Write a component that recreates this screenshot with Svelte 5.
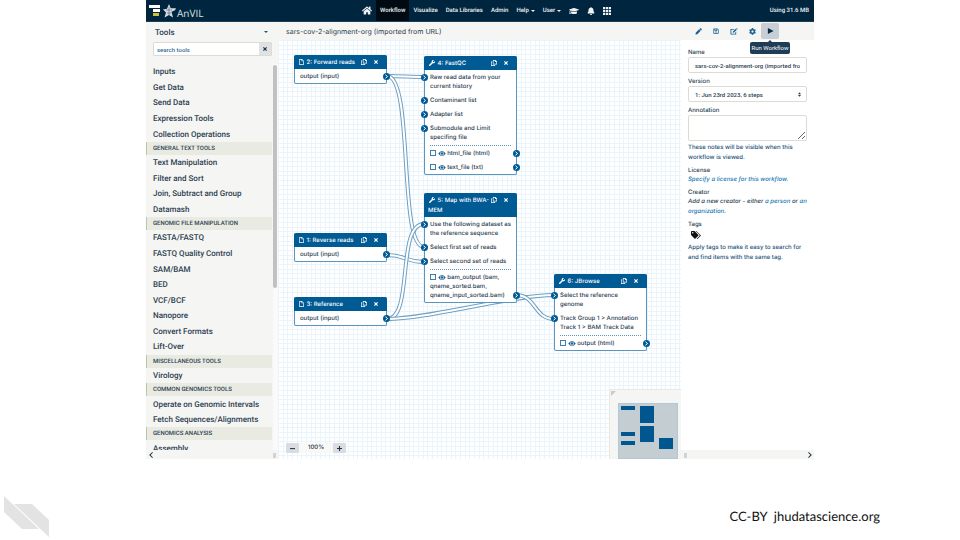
<script>
  const icons = {
    home: ['0 0 576 512', 'M280.37 148.26L96 300.11V464a16 16 0 0 0 16 16l112.06-.29a16 16 0 0 0 15.92-16V368a16 16 0 0 1 16-16h64a16 16 0 0 1 16 16v95.64a16 16 0 0 0 16 16.05L464 480a16 16 0 0 0 16-16V300L295.67 148.26a12.19 12.19 0 0 0-15.3 0zM571.6 251.47L488 182.56V44.05a12 12 0 0 0-12-12h-56a12 12 0 0 0-12 12v72.61L318.47 43a48 48 0 0 0-61 0L4.34 251.47a12 12 0 0 0-1.6 16.9l25.5 31A12 12 0 0 0 45.15 301l235.22-193.74a12.19 12.19 0 0 1 15.3 0L530.9 301a12 12 0 0 0 16.9-1.6l25.5-31a12 12 0 0 0-1.7-16.93z'],
    cap: ['0 0 640 512', 'M622.34 153.2L343.4 67.5c-15.2-4.67-31.6-4.67-46.79 0L17.66 153.2c-23.54 7.23-23.54 38.36 0 45.59l48.63 14.94c-10.67 13.19-17.23 29.28-17.88 46.9C38.78 266.15 32 276.11 32 288c0 10.78 5.68 19.85 13.86 25.65L20.33 428.53C18.11 438.52 25.71 448 35.94 448h56.11c10.24 0 17.84-9.48 15.62-19.47L82.14 313.65C90.32 307.85 96 298.78 96 288c0-11.57-6.47-21.25-15.66-26.87.76-15.02 8.44-28.3 20.69-36.72L296.6 284.5c9.06 2.78 26.44 6.25 46.79 0l278.95-85.7c23.55-7.24 23.55-38.36 0-45.6zM352.79 315.09c-28.53 8.76-52.84 3.92-65.59 0l-145.02-44.55L128 384c0 35.35 85.96 64 192 64s192-28.65 192-64l-14.18-113.47-145.03 44.56z'],
    bell: ['0 0 448 512', 'M224 512c35.32 0 63.97-28.65 63.97-64H160.03c0 35.35 28.65 64 63.97 64zm215.39-149.71c-19.32-20.76-55.47-51.99-55.47-154.29 0-77.7-54.48-139.9-127.94-155.16V32c0-17.67-14.32-32-31.98-32s-31.98 14.33-31.98 32v20.84C118.56 68.1 64.08 130.3 64.08 208c0 102.3-36.15 133.53-55.47 154.29-6 6.45-8.66 14.16-8.61 21.71.11 16.4 12.98 32 32.1 32h383.8c19.12 0 32-15.6 32.1-32 .05-7.55-2.61-15.27-8.61-21.71z'],
    grid: ['0 0 18 18', 'M0 0h5v5H0zM6.500 0h5v5h-5zM13 0h5v5h-5zM0 6.500h5v5H0zM6.500 6.500h5v5h-5zM13 6.500h5v5h-5zM0 13h5v5H0zM6.500 13h5v5h-5zM13 13h5v5h-5z'],
    cog: ['0 0 512 512', 'M487.4 315.7l-42.6-24.6c4.3-23.2 4.3-47 0-70.2l42.6-24.6c4.9-2.8 7.1-8.6 5.5-14-11.1-35.6-30-67.8-54.7-94.6-3.8-4.1-10-5.1-14.8-2.3L380.8 110c-17.9-15.4-38.5-27.3-60.8-35.1V25.8c0-5.6-3.9-10.5-9.4-11.7-36.7-8.2-74.3-7.8-109.2 0-5.5 1.2-9.4 6.1-9.4 11.7V75c-22.2 7.9-42.8 19.8-60.8 35.1L88.7 85.5c-4.9-2.8-11-1.9-14.8 2.3-24.7 26.7-43.6 58.9-54.7 94.6-1.7 5.4.6 11.2 5.5 14L67.3 221c-4.3 23.2-4.3 47 0 70.2l-42.6 24.6c-4.9 2.8-7.1 8.6-5.5 14 11.1 35.6 30 67.8 54.7 94.6 3.8 4.1 10 5.1 14.8 2.3l42.6-24.6c17.9 15.4 38.5 27.3 60.8 35.1v49.2c0 5.6 3.9 10.5 9.4 11.7 36.7 8.2 74.3 7.8 109.2 0 5.5-1.2 9.4-6.1 9.4-11.7v-49.2c22.2-7.9 42.8-19.8 60.8-35.1l42.6 24.6c4.9 2.8 11 1.9 14.8-2.3 24.7-26.7 43.6-58.9 54.7-94.6 1.5-5.5-.7-11.3-5.6-14.1zM256 336c-44.1 0-80-35.9-80-80s35.9-80 80-80 80 35.9 80 80-35.9 80-80 80z'],
    wrench: ['0 0 512 512', 'M507.73 109.1c-2.24-9.03-13.54-12.09-20.12-5.51l-74.36 74.36-67.88-11.31-11.31-67.88 74.36-74.36c6.62-6.62 3.43-17.9-5.66-20.16-47.38-11.74-99.55.91-136.58 37.93-39.64 39.64-50.55 97.1-34.05 147.2L18.74 402.76c-24.99 24.99-24.99 65.51 0 90.5 24.99 24.99 65.51 24.99 90.5 0l213.21-213.21c50.12 16.71 107.47 5.68 147.37-34.22 37.07-37.07 49.7-89.32 37.91-136.73z'],
    play: ['0 0 16 16', 'M2 1v14l13-7z'],
    pencil: ['0 0 16 16', 'M1 15l1-4.500 7.500-7.500 3.500 3.500L5.500 14zM10.300 2.200l1.500-1.500q1-.7 1.800 0l1.700 1.700q.7.900 0 1.800l-1.500 1.500z'],
    save: ['0 0 16 16', 'M1 1h11l3 3v11H1zM3 3v10h10V5l-1.500-2H11v4H4V3zM6 3v2.500h3V3zM8 8.500a2 2 0 1 1 0 4 2 2 0 0 1 0-4z'],
    edit: ['0 0 18 16', 'M1 2h9L8.500 4H3v9h9v-3l2-2v7H1zM6 11l.6-3L13 1.600l2.500 2.500L9 10.500zM14 .8l1-.8 2.500 2.300-1 1z'],
    file: ['0 0 12 16', 'M1 0h6.500L12 4.500V16H0V0zM1.800 1.800v12.400h8.400V6H6V1.800zM7.500 2v2.500H10z'],
    copy: ['0 0 16 16', 'M5 0h7l4 4v8H5zM6.700 1.700v8.600h7.600V5.500H11V1.700zM0 4h3.500v1.700H1.700v8.600h7.600V13H11v3H0z'],
    close: ['0 0 12 12', 'M2.500 0L6 3.500 9.500 0 12 2.500 8.500 6 12 9.500 9.500 12 6 8.500 2.500 12 0 9.500 3.500 6 0 2.500z'],
    eye: ['0 0 18 12', 'M0 6Q4 0 9 0t9 6q-4 6-9 6T0 6zM9 1.500a4.500 4.500 0 1 0 0 9 4.500 4.500 0 0 0 0-9zM9 3a3 3 0 1 1 0 6 3 3 0 0 1 0-6z'],
    tags: ['0 0 20 16', 'M0 1.500Q0 0 1.500 0H7l7.500 7.500q1 1 0 2L9 15q-1 1-2 0L0 8zM3.500 2a1.500 1.500 0 1 0 0 3 1.500 1.500 0 0 0 0-3zM9 0h1.500l8.500 8q1 1 0 2l-5.500 5.500q-1 .8-2-.2l5-5q1.500-1.800 0-3.300z'],
    left: ['0 0 10 16', 'M8.500 0L10 2 4 8l6 6-1.500 2L0 8z'],
    right: ['0 0 10 16', 'M1.500 0L0 2l6 6-6 6 1.500 2L10 8z'],
    minus: ['0 0 12 12', 'M0 5h12v2.500H0z'],
    plus: ['0 0 12 12', 'M4.700 0h2.600v4.700H12v2.600H7.300V12H4.700V7.300H0V4.700h4.700z'],
    caret: ['0 0 8 4', 'M0 0h8L4 4z'],
    sort: ['0 0 8 12', 'M4 0l4 5H0zM0 7h8l-4 5z'],
  };

  const tools = [
    'Inputs', 'Get Data', 'Send Data', 'Expression Tools', 'Collection Operations',
    '#GENERAL TEXT TOOLS', 'Text Manipulation', 'Filter and Sort', 'Join, Subtract and Group', 'Datamash',
    '#GENOMIC FILE MANIPULATION', 'FASTA/FASTQ', 'FASTQ Quality Control', 'SAM/BAM', 'BED', 'VCF/BCF', 'Nanopore', 'Convert Formats', 'Lift-Over',
    '#MISCELLANEOUS TOOLS', 'Virology',
    '#COMMON GENOMICS TOOLS', 'Operate on Genomic Intervals', 'Fetch Sequences/Alignments',
    '#GENOMICS ANALYSIS', 'Assembly',
  ];

  const nodes = [
    { x: 16, y: 15, title: '2: Forward reads', icon: 'file', data: 'output (input)' },
    { x: 16, y: 193, title: '1: Reverse reads', icon: 'file', data: 'output (input)' },
    { x: 16, y: 257, title: '3: Reference', icon: 'file', data: 'output (input)' },
    { x: 146, y: 16, title: '4: FastQC', icon: 'wrench',
      inputs: ['Raw read data from your\ncurrent history', 'Contaminant list', 'Adapter list', 'Submodule and Limit\nspecifing file'],
      outputs: ['html_file (html)', 'text_file (txt)'] },
    { x: 146, y: 153, title: '5: Map with BWA-MEM', icon: 'wrench',
      inputs: ['Use the following dataset as\nthe reference sequence', 'Select first set of reads', 'Select second set of reads'],
      outputs: ['bam_output (bam, qname_sorted.bam, qname_input_sorted.bam)'] },
    { x: 276, y: 234, title: '6: JBrowse', icon: 'wrench',
      inputs: ['Select the reference\ngenome', 'Track Group 1 > Annotation\nTrack 1 > BAM Track Data'],
      outputs: ['output (html)'] },
  ];

  const wires = [
    'M109 36C124 36 132 37 146 37',
    'M109 36C136 36 120 207 146 207',
    'M109 215C128 215 127 222 146 222',
    'M109 279C136 279 118 184 146 184',
    'M109 279C150 279 235 255 276 255',
    'M238 255C258 255 256 279 276 279',
  ];

  const minis = [[3, 3, 14, 4], [3, 29, 14, 4], [3, 38, 14, 4], [22, 3, 14, 17], [22, 23, 14, 16], [41, 35, 14, 11]];
</script>

{#snippet icon(name, w, h)}
  <svg class="icon" viewBox={icons[name][0]} width={w} height={h} aria-hidden="true"><path fill-rule="evenodd" d={icons[name][1]} /></svg>
{/snippet}

{#snippet terminal(side)}
  <svg class="terminal {side}" viewBox="0 0 14 14" width="7" height="7" aria-hidden="true">
    <circle cx="7" cy="7" r="7" /><path d="M5 3.500L9 7l-4 3.500" />
  </svg>
{/snippet}

<div class="slide">
  <div class="app">
    <nav class="masthead">
      <a class="brand" href="#anvil">
        <svg viewBox="0 0 27 14" width="27" height="14" aria-hidden="true">
          <path fill="#fff" d="M0 1h11v3H0zM4 5h7v3H4z" /><path fill="#d4bd31" d="M4 9h6v3H4z" />
          <path fill="#d6dde2" d="M20 0l1.700 4.300H27l-1 2-3.500 1.500 1.500 5.700-4-2.500-4.500 2.500 1.500-5-3-3 4-.7z" />
          <path d="M20 3v8M17 6h6M18 9h4" stroke="#00263f" stroke-width=".4" />
        </svg>
        <span>AnVIL</span>
      </a>
      <div class="links">
        <a href="#home" aria-label="Home">{@render icon('home', 10, 9)}</a>
        <a class="active" href="#workflow">Workflow</a>
        <a href="#visualize">Visualize</a>
        <a href="#data">Data Libraries</a>
        <a href="#admin">Admin</a>
        <a href="#help">Help {@render icon('caret', 4, 2)}</a>
        <a href="#user">User {@render icon('caret', 4, 2)}</a>
        <a href="#training" aria-label="Training">{@render icon('cap', 10, 8)}</a>
        <a href="#alerts" aria-label="Notifications">{@render icon('bell', 8, 8)}</a>
        <a href="#apps" aria-label="Apps">{@render icon('grid', 8, 8)}</a>
      </div>
      <span class="usage">Using 31.6 MB</span>
    </nav>

    <div class="body">
      <aside class="tools">
        <div class="tools-head"><h2>Tools</h2>{@render icon('caret', 4, 2)}</div>
        <div class="search">
          <input type="text" placeholder="search tools" aria-label="search tools" />
          <button aria-label="Clear search">{@render icon('close', 4, 4)}</button>
        </div>
        <div class="list">
          <ul>
            {#each tools as t}
              {#if t[0] === '#'}<li class="section">{t.slice(1)}</li>{:else}<li><a href="#tool">{t}</a></li>{/if}
            {/each}
          </ul>
          <div class="track"><div class="thumb"></div></div>
        </div>
        <div class="strip"><button aria-label="Collapse tools">{@render icon('left', 4, 6)}</button><i></i></div>
      </aside>

      <main>
        <header class="title">
          <h1>sars-cov-2-alignment-org (imported from URL)</h1>
          <div class="actions">
            <button aria-label="Edit attributes">{@render icon('pencil', 7, 7)}</button>
            <button aria-label="Save">{@render icon('save', 6, 6)}</button>
            <button aria-label="Report">{@render icon('edit', 8, 7)}</button>
            <button aria-label="Options">{@render icon('cog', 7, 7)}</button>
            <button class="run" aria-label="Run Workflow">{@render icon('play', 7, 8)}<span class="tip">Run Workflow</span></button>
          </div>
        </header>

        <div class="work">
          <section class="canvas">
            <svg class="wires" aria-hidden="true">
              {#each wires as d}<path class="outer" {d} /><path class="inner" {d} />{/each}
            </svg>
            {#each nodes as n}
              <article class="node" style="left:{n.x}px;top:{n.y}px">
                <header>
                  <h3>{@render icon(n.icon, n.icon === 'file' ? 5 : 6, 6)} {n.title}</h3>
                  <button aria-label="Duplicate">{@render icon('copy', 6, 6)}</button>
                  <button aria-label="Remove">{@render icon('close', 4, 4)}</button>
                </header>
                {#if n.data}
                  <div class="row">{n.data}{@render terminal('out')}</div>
                {:else}
                  {#each n.inputs as t}<div class="row">{t}{@render terminal('in')}</div>{/each}
                  <hr />
                  {#each n.outputs as t}
                    <div class="row"><label><input type="checkbox" /> {@render icon('eye', 8, 5)} {t}</label>{@render terminal('out')}</div>
                  {/each}
                {/if}
              </article>
            {/each}
            <div class="zoom">
              <button aria-label="Zoom out">{@render icon('minus', 5, 5)}</button>
              <span>100%</span>
              <button aria-label="Zoom in">{@render icon('plus', 5, 5)}</button>
            </div>
            <div class="minimap">
              <svg class="grip" viewBox="0 0 5 5" width="5" height="5" aria-hidden="true"><path d="M0 0h5L0 5z" /></svg>
              <svg class="map" width="60" height="56" aria-hidden="true">
                {#each minis as [x, y, w, h]}<rect {x} {y} width={w} height={h} />{/each}
              </svg>
            </div>
          </section>

          <aside class="props">
            <div class="form">
              <label for="name">Name</label>
              <input id="name" type="text" value="sars-cov-2-alignment-org (imported from URL)" />
              <label for="version">Version</label>
              <div class="select">
                <select id="version"><option>1: Jun 23rd 2023, 6 steps</option></select>
                {@render icon('sort', 3, 5)}
              </div>
              <label for="note">Annotation</label>
              <textarea id="note"></textarea>
              <p class="hint">These notes will be visible when this workflow is viewed.</p>
              <h4>License</h4>
              <p><a href="#license">Specify a license for this workflow.</a></p>
              <h4>Creator</h4>
              <p><em>Add a new creator - either <a href="#person">a person</a> or <a href="#org">an organization</a>.</em></p>
              <h4>Tags</h4>
              <button class="tags" aria-label="Add tags">{@render icon('tags', 10, 8)}</button>
              <p class="hint">Apply tags to make it easy to search for and find items with the same tag.</p>
            </div>
            <div class="strip"><i></i><button aria-label="Collapse panel">{@render icon('right', 4, 6)}</button></div>
          </aside>
        </div>
      </main>
    </div>
  </div>

  <footer>
    <svg viewBox="0 0 46 41" width="46" height="41" aria-hidden="true">
      <path fill="#e3e3e3" d="M0 0l35 33H18L0 16zM10 8h18l17 16v17z" />
    </svg>
    <p>CC-BY&nbsp; jhudatascience.org</p>
  </footer>
</div>

<style>
  :global(body) { margin: 0; background: #fff; }
  .slide { min-height: 100vh; display: flex; flex-direction: column; font: 500 6px/9px Inter, "Liberation Sans", Arial, sans-serif; color: #2c3e50; text-rendering: geometricPrecision; }
  .slide * { box-sizing: border-box; }
  h1, h2, h3, h4, p, ul { margin: 0; padding: 0; font: inherit; }
  button { border: 0; padding: 0; background: none; color: inherit; font: inherit; display: flex; align-items: center; justify-content: center; }
  input, select, textarea { font: inherit; color: inherit; margin: 0; }
  a { color: inherit; text-decoration: none; }
  .icon { fill: currentColor; flex: none; }

  .app { flex: 1; margin: 0 146px; display: flex; flex-direction: column; }
  .masthead { height: 22px; background: #00263f; color: #f0f3f5; display: flex; align-items: center; justify-content: space-between; padding: 0 5px 0 3px; border-bottom: 1px solid #1d3d54; font-family: Roboto, sans-serif; }
  .brand { display: flex; align-items: center; gap: 1px; font: 10px/14px "Open Sans", sans-serif; color: #dbe2e7; }
  .brand span { padding-top: 4px; }
  .links { display: flex; align-self: stretch; }
  .links a { display: flex; align-items: center; gap: 2px; padding: 0 4px; }
  .links .active { background: #000a12; }

  .body { flex: 1; display: flex; }
  .tools { width: 132px; background: #f5f5f3; display: flex; flex-direction: column; }
  .tools-head { height: 20px; display: flex; align-items: center; justify-content: space-between; padding: 0 10px 0 9px; font-family: Roboto, sans-serif; font-size: 8px; color: #25537b; }
  .tools-head h2 { color: #2c3e50; }
  .search { display: flex; height: 14px; margin: 0 6px 8px 7px; border: 1px solid #dcdcd6; border-radius: 1px; }
  .search input { flex: 1; min-width: 0; border: 0; padding: 0 3px; background: #fff; font-family: Roboto, sans-serif; }
  .search input::placeholder { color: #356a96; opacity: 1; }
  .search button { width: 12px; background: #dfe1e2; color: #1d3549; }
  .list { flex: 1; display: flex; overflow: hidden; min-height: 0; font-family: Roboto, sans-serif; font-size: 8px; }
  .list ul { flex: 1; list-style: none; display: flex; flex-direction: column; margin: 0 1px -6px 0; }
  .list li { flex: 31 0 0; display: flex; align-items: center; padding-left: 7px; white-space: nowrap; }
  .list .section { flex-grow: 26; background: #e9ebe3; border-left: 1px solid #bac7a7; padding-left: 6px; font-size: 6px; }
  .track { width: 5px; background: #fafafa; padding: 1px 1px 0 0; }
  .thumb { height: 58%; background: #c1c1c1; border-radius: 2px; }
  .strip { height: 9px; display: flex; align-items: center; justify-content: space-between; padding: 1px 2px 0 3px; background: #f5f5f3; color: #1d3549; }
  .strip i { width: 3px; height: 5px; background: #d2d2d0; }

  main { flex: 1; min-width: 0; display: flex; flex-direction: column; }
  .title { height: 18px; background: #f5f5f3; display: flex; align-items: center; justify-content: space-between; padding: 0 35px 0 8px; }
  .title h1 { font-size: 7px; font-weight: 400; }
  .actions { display: flex; height: 16px; color: #1b6497; }
  .actions button { width: 18px; }
  .actions .run { position: relative; background: #c8ced6; color: #0b2b45; border-radius: 2px; }
  .tip { position: absolute; z-index: 3; top: 19px; left: -11px; width: 40px; line-height: 12px; white-space: nowrap; background: #1f3d55; color: #fff; border-radius: 2px; font-family: Roboto, sans-serif; font-weight: 400; }
  .tip::before { content: ""; position: absolute; top: -2px; left: 18px; border: 2px solid transparent; border-top: 0; border-bottom-color: #1f3d55; }

  .work { flex: 1; display: flex; }
  .canvas {
    flex: 1; position: relative; overflow: hidden;
    background-image:
      linear-gradient(90deg, #eaf5fb 1px, transparent 1px 5px, #eaf5fb 5px 6px, transparent 6px 9px, #eaf5fb 9px 10px, transparent 10px),
      linear-gradient(#eaf5fb 1px, transparent 1px 5px, #eaf5fb 5px 6px, transparent 6px 9px, #eaf5fb 9px 10px, transparent 10px);
    background-size: 14px 14px;
  }
  .wires { position: absolute; inset: 0; width: 100%; height: 100%; fill: none; }
  .outer { stroke: #6f9fc2; stroke-width: 4; }
  .inner { stroke: #fff; stroke-width: 2; }
  .node { position: absolute; width: 93px; background: #fff; border: 1px solid #5b95bd; border-top: 0; border-radius: 2px; }
  .node header { display: flex; align-items: flex-start; gap: 7px; margin: 0 -1px; padding: 2px 9px 1px 4px; line-height: 10px; background: #005a94; color: #fff; border-radius: 2px 2px 0 0; }
  .node h3 { flex: 1; margin-right: -7px; padding-top: 1px; }
  .node h3 .icon { vertical-align: -1px; margin: 0 1px; }
  .node header button { height: 10px; }
  .row { position: relative; padding: 3px 2px 2px 5px; white-space: pre-line; }
  .row input { appearance: none; width: 6px; height: 6px; border: 1px solid #3f7fac; vertical-align: -1px; background: #fff; }
  .row .icon { color: #1b6497; vertical-align: -1px; }
  .node hr { margin: 1px 5px 0; border: 0; border-top: 1px dotted #5b95bd; }
  .terminal { position: absolute; top: 4px; fill: #005a94; }
  .row:last-child .terminal { top: auto; bottom: 3px; }
  .terminal path { fill: none; stroke: #fff; stroke-width: 2; }
  .in { left: -4px; }
  .out { right: -4px; }
  .zoom { position: absolute; left: 8px; bottom: 6px; display: flex; height: 10px; color: #1d3549; }
  .zoom button { width: 13px; background: #d9dde1; border-radius: 1px; }
  .zoom span { width: 34px; line-height: 10px; text-align: center; background: #f8f8f7; }
  .minimap { position: absolute; right: 0; bottom: 0; padding: 13px 3px 0 8px; background: #f5f5f3; border: 1px solid #e8e8e3; border-width: 1px 0 0 1px; display: flex; }
  .grip { position: absolute; top: 1px; left: 1px; fill: #c9c9c6; }
  .map { background: #c4cdd1; outline: 1px solid #b1c8d6; outline-offset: -1px; fill: #00568f; }

  .props { width: 133px; display: flex; flex-direction: column; }
  .form { flex: 1; padding: 8px 7px 0; display: flex; flex-direction: column; }
  .form label { line-height: 9px; }
  .form > input, .select select { width: 100%; height: 16px; border: 1px solid #dcdcd4; border-radius: 2px; padding: 0 6px; background: #fff; font-family: Roboto, sans-serif; }
  .form > input, .select { margin-bottom: 4px; }
  .select { position: relative; display: flex; align-items: center; }
  .select select { appearance: none; }
  .select .icon { position: absolute; right: 6px; }
  textarea { height: 26px; border: 1px solid #dcdcd4; border-radius: 2px; padding: 2px; }
  .form p { line-height: 10px; }
  .hint { color: #25537b; padding-top: 2px; }
  .form h4 { line-height: 9px; padding-top: 3px; }
  .form a { color: #2077b3; font-style: italic; }
  .tags { align-self: flex-start; height: 12px; padding-left: 3px; color: #111; }

  footer { height: 81px; display: flex; align-items: center; justify-content: space-between; padding: 33px 80px 0 4px; }
  footer p { font: 13px/20px Lato, sans-serif; color: #111; }
</style>
